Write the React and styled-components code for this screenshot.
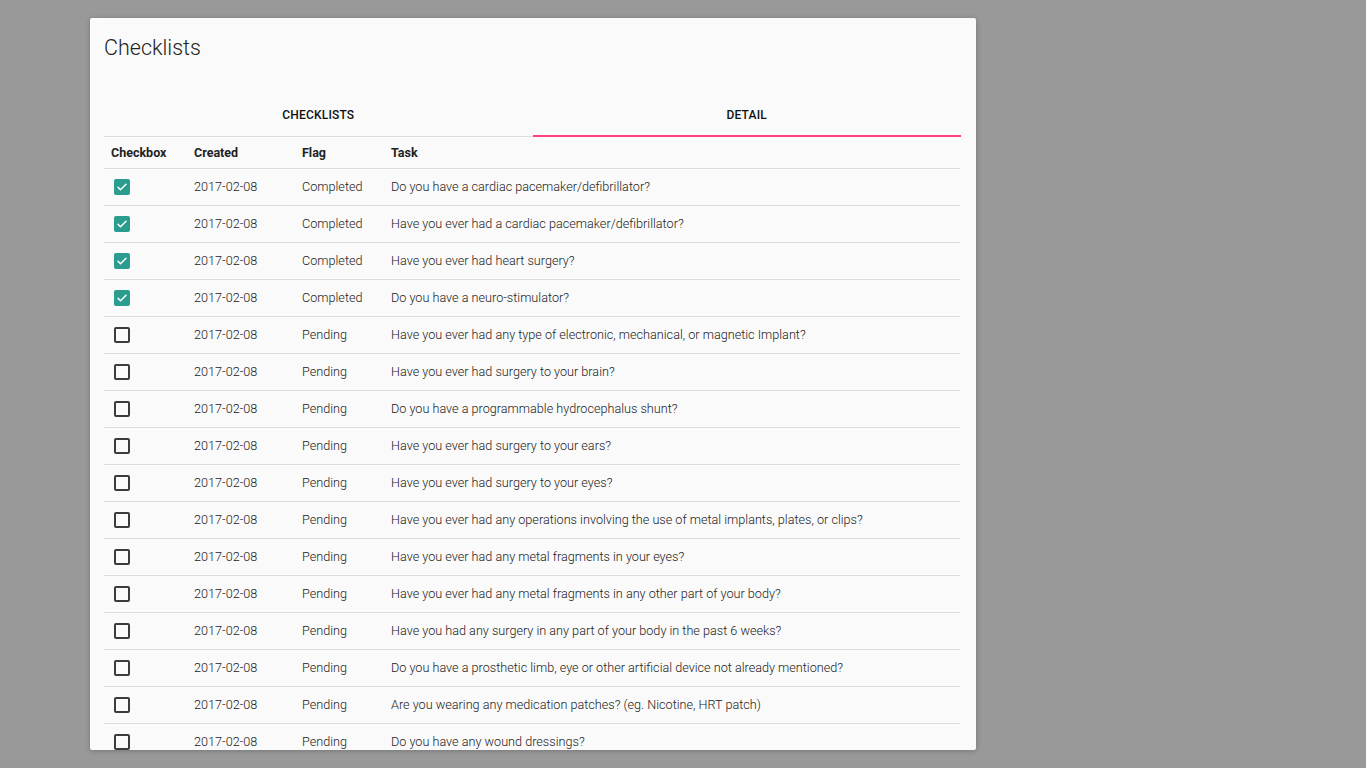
import React from "react";
import styled, { createGlobalStyle } from "styled-components";

const Global = createGlobalStyle`
  html, body { margin: 0; padding: 0; background: #999999; height: 100%; }
  body { font-family: Roboto, "Noto Sans", sans-serif; overflow: hidden; }
`;

const Page = styled.div`
  padding: 18px 0 0 90px;
  height: 768px;
  box-sizing: border-box;
`;

const Card = styled.div`
  width: 886px;
  height: 732px;
  box-sizing: border-box;
  background: #fafafa;
  padding: 15px 15px 0 14px;
  overflow: hidden;
  box-shadow: 0 1px 6px rgba(0,0,0,0.12), 0 1px 4px rgba(0,0,0,0.12);
  border-radius: 2px;
`;

const Title = styled.h2`
  margin: 0;
  font-size: 21.5px;
  font-weight: 300;
  line-height: 30px;
  color: #222;
`;

const TabBar = styled.div`
  margin-top: 28px;
  display: flex;
  border-bottom: 1px solid #dcdcdc;
`;

const Tab = styled.div`
  flex: 1;
  height: 46px;
  display: flex;
  align-items: center;
  justify-content: center;
  font-size: 12px;
  font-weight: 500;
  color: #111;
  letter-spacing: 0.2px;
  box-sizing: border-box;
  margin-bottom: -1px;
  border-bottom: 2px solid ${(p) => (p.$active ? "#ff4081" : "transparent")};
  padding-top: 3px;
`;

const Table = styled.div`
  display: flex;
  flex-direction: column;
  margin-right: 1px;
`;

const Row = styled.div`
  display: grid;
  grid-template-columns: 90px 108px 89px 1fr;
  align-items: center;
  box-sizing: content-box;
  height: ${(p) => (p.$head ? "31px" : "35px")};
  padding-bottom: ${(p) => (p.$head ? "0" : "1px")};
  border-bottom: 1px solid #dcdcdc;
  font-size: ${(p) => (p.$head ? "12.5px" : "12.65px")};
  font-weight: ${(p) => (p.$head ? 700 : 300)};
  color: #222;
`;

const Cell = styled.div`
  padding-left: ${(p) => (p.$first ? "7px" : "0")};
  white-space: nowrap;
`;

const Box = styled.div`
  margin-left: 3px;
  width: 16px;
  height: 16px;
  box-sizing: border-box;
  border-radius: 2px;
  border: ${(p) => (p.$checked ? "none" : "2px solid #3c3c3c")};
  background: ${(p) => (p.$checked ? "#2a9d8f" : "transparent")};
  display: flex;
  align-items: center;
  justify-content: center;
`;

const Check = () => (
  <svg width="12" height="12" viewBox="0 0 24 24" fill="none">
    <path d="M4 12.5l5 5L20 6.5" stroke="#fff" strokeWidth="3" strokeLinecap="round" strokeLinejoin="round" />
  </svg>
);

const tasks = [
  "Do you have a cardiac pacemaker/defibrillator?",
  "Have you ever had a cardiac pacemaker/defibrillator?",
  "Have you ever had heart surgery?",
  "Do you have a neuro-stimulator?",
  "Have you ever had any type of electronic, mechanical, or magnetic Implant?",
  "Have you ever had surgery to your brain?",
  "Do you have a programmable hydrocephalus shunt?",
  "Have you ever had surgery to your ears?",
  "Have you ever had surgery to your eyes?",
  "Have you ever had any operations involving the use of metal implants, plates, or clips?",
  "Have you ever had any metal fragments in your eyes?",
  "Have you ever had any metal fragments in any other part of your body?",
  "Have you had any surgery in any part of your body in the past 6 weeks?",
  "Do you have a prosthetic limb, eye or other artificial device not already mentioned?",
  "Are you wearing any medication patches? (eg. Nicotine, HRT patch)",
  "Do you have any wound dressings?",
];

export default function App() {
  return (
    <>
      <Global />
      <Page>
        <Card>
          <Title>Checklists</Title>
          <TabBar>
            <Tab>CHECKLISTS</Tab>
            <Tab $active>DETAIL</Tab>
          </TabBar>
          <Table>
            <Row $head>
              <Cell $first>Checkbox</Cell>
              <Cell>Created</Cell>
              <Cell>Flag</Cell>
              <Cell>Task</Cell>
            </Row>
            {tasks.map((t, i) => {
              const done = i < 4;
              return (
                <Row key={i}>
                  <Cell $first>
                    <Box $checked={done}>{done && <Check />}</Box>
                  </Cell>
                  <Cell>2017-02-08</Cell>
                  <Cell>{done ? "Completed" : "Pending"}</Cell>
                  <Cell>{t}</Cell>
                </Row>
              );
            })}
          </Table>
        </Card>
      </Page>
    </>
  );
}
